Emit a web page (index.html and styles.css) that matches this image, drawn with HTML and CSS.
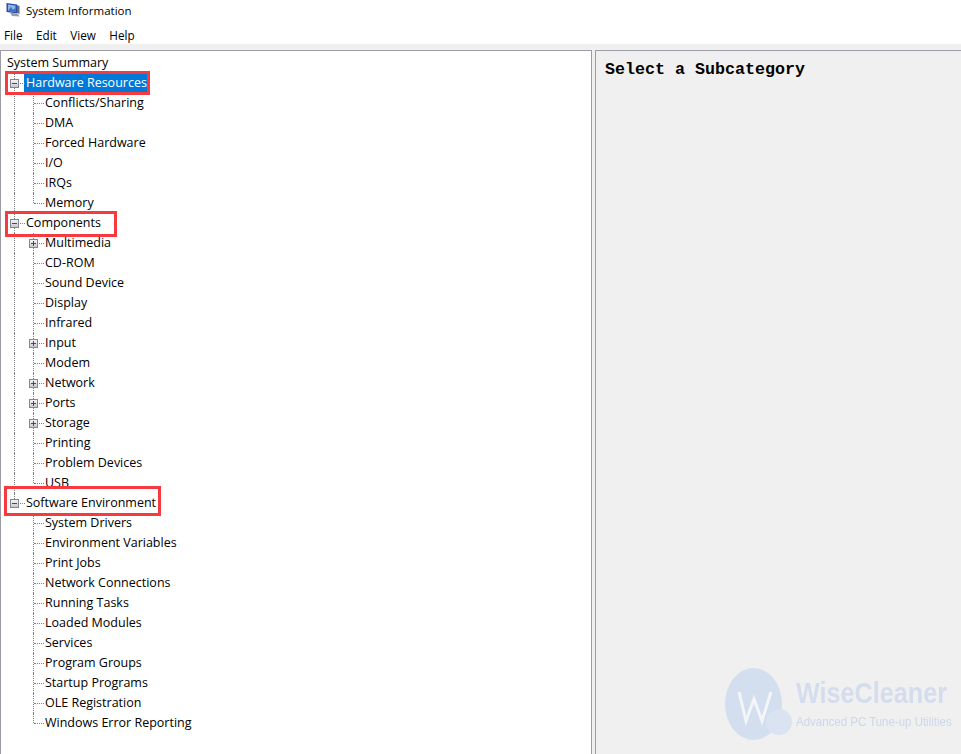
FILE: index.html
```html
<!DOCTYPE html>
<html lang="en">
<head>
<meta charset="utf-8">
<title>System Information</title>
<link rel="stylesheet" href="styles.css">
</head>
<body>
<div class="window">
  <header class="titlebar">
    <svg class="appicon" width="16" height="16" viewBox="0 0 16 16"><path d="M1.5 1l10.5 1.5v9L1.5 10z" fill="#2a4fa8"/><path d="M3 2.6l7.5 1v6.4L3 9z" fill="#8fb4e8"/><path d="M3 9l3-4 2 3 2.5-2v4z" fill="#3f6fc4"/><path d="M5 10.5l8 1.5 1.5 2.5L7 14z" fill="#9a9aa6"/><path d="M12 3l2.5 1v8L12 11z" fill="#5c6a8c"/></svg>
    <span>System Information</span>
  </header>
  <nav class="menubar"><span>File</span><span>Edit</span><span>View</span><span>Help</span></nav>
  <main class="panes">
    <section class="tree">
      <div class="row top"><span class="label">System Summary</span></div>

      <div class="row"><span class="cell tee rootc"><i class="exp minus"></i></span><span class="label sel">Hardware Resources</span></div>
      <div class="row"><span class="cell pipe"></span><span class="cell tee"></span><span class="label">Conflicts/Sharing</span></div>
      <div class="row"><span class="cell pipe"></span><span class="cell tee"></span><span class="label">DMA</span></div>
      <div class="row"><span class="cell pipe"></span><span class="cell tee"></span><span class="label">Forced Hardware</span></div>
      <div class="row"><span class="cell pipe"></span><span class="cell tee"></span><span class="label">I/O</span></div>
      <div class="row"><span class="cell pipe"></span><span class="cell tee"></span><span class="label">IRQs</span></div>
      <div class="row"><span class="cell pipe"></span><span class="cell end"></span><span class="label">Memory</span></div>

      <div class="row"><span class="cell tee rootc"><i class="exp minus"></i></span><span class="label">Components</span></div>
      <div class="row"><span class="cell pipe"></span><span class="cell tee"><i class="exp plus"></i></span><span class="label">Multimedia</span></div>
      <div class="row"><span class="cell pipe"></span><span class="cell tee"></span><span class="label">CD-ROM</span></div>
      <div class="row"><span class="cell pipe"></span><span class="cell tee"></span><span class="label">Sound Device</span></div>
      <div class="row"><span class="cell pipe"></span><span class="cell tee"></span><span class="label">Display</span></div>
      <div class="row"><span class="cell pipe"></span><span class="cell tee"></span><span class="label">Infrared</span></div>
      <div class="row"><span class="cell pipe"></span><span class="cell tee"><i class="exp plus"></i></span><span class="label">Input</span></div>
      <div class="row"><span class="cell pipe"></span><span class="cell tee"></span><span class="label">Modem</span></div>
      <div class="row"><span class="cell pipe"></span><span class="cell tee"><i class="exp plus"></i></span><span class="label">Network</span></div>
      <div class="row"><span class="cell pipe"></span><span class="cell tee"><i class="exp plus"></i></span><span class="label">Ports</span></div>
      <div class="row"><span class="cell pipe"></span><span class="cell tee"><i class="exp plus"></i></span><span class="label">Storage</span></div>
      <div class="row"><span class="cell pipe"></span><span class="cell tee"></span><span class="label">Printing</span></div>
      <div class="row"><span class="cell pipe"></span><span class="cell tee"></span><span class="label">Problem Devices</span></div>
      <div class="row"><span class="cell pipe"></span><span class="cell end"></span><span class="label">USB</span></div>

      <div class="row"><span class="cell end rootc"><i class="exp minus"></i></span><span class="label">Software Environment</span></div>
      <div class="row"><span class="cell blank"></span><span class="cell tee"></span><span class="label">System Drivers</span></div>
      <div class="row"><span class="cell blank"></span><span class="cell tee"></span><span class="label">Environment Variables</span></div>
      <div class="row"><span class="cell blank"></span><span class="cell tee"></span><span class="label">Print Jobs</span></div>
      <div class="row"><span class="cell blank"></span><span class="cell tee"></span><span class="label">Network Connections</span></div>
      <div class="row"><span class="cell blank"></span><span class="cell tee"></span><span class="label">Running Tasks</span></div>
      <div class="row"><span class="cell blank"></span><span class="cell tee"></span><span class="label">Loaded Modules</span></div>
      <div class="row"><span class="cell blank"></span><span class="cell tee"></span><span class="label">Services</span></div>
      <div class="row"><span class="cell blank"></span><span class="cell tee"></span><span class="label">Program Groups</span></div>
      <div class="row"><span class="cell blank"></span><span class="cell tee"></span><span class="label">Startup Programs</span></div>
      <div class="row"><span class="cell blank"></span><span class="cell tee"></span><span class="label">OLE Registration</span></div>
      <div class="row"><span class="cell blank"></span><span class="cell end"></span><span class="label">Windows Error Reporting</span></div>
    </section>
    <section class="detail">
      <h1 class="heading">Select a Subcategory</h1>
    </section>
  </main>
  <div class="mark mark-hw"></div>
  <div class="mark mark-comp"></div>
  <div class="mark mark-sw"></div>
  <div class="watermark">
    <svg class="wm-logo" width="68" height="74" viewBox="0 0 68 74"><ellipse cx="28.5" cy="37" rx="28.5" ry="36" fill="#d3deee"/><circle cx="54" cy="55" r="13" fill="#d9e3f1"/><path d="M14 25l7 29 8-22 8 22 9-29" fill="none" stroke="#f3f5f8" stroke-width="3"/></svg>
    <div class="wm-text">
      <div class="wm-name">WiseCleaner</div>
      <div class="wm-tag">Advanced PC Tune-up Utilities</div>
    </div>
  </div>
</div>
</body>
</html>
```

FILE: styles.css
```css
* { box-sizing: border-box; }
html, body { margin: 0; height: 100%; overflow: hidden; background: #fff; }
body { font-family: "Open Sans", "Noto Sans", sans-serif; font-size: 12.5px; color: #000; }

.window { position: relative; width: 961px; height: 754px; display: flex; flex-direction: column; }

.titlebar { height: 22px; display: flex; align-items: center; padding: 0 0 2px 5px; gap: 5px; font-size: 11.5px; }
.appicon { flex: none; }
.menubar { height: 22px; display: flex; align-items: center; padding: 3px 0 0 4px; gap: 13.5px; font-size: 11.7px; }

.panes { flex: 1; min-height: 0; display: flex; gap: 3px; background: #f0f0f0; padding-top: 6px; }

.tree { width: 592px; flex: none; background: #fff; border: 1px solid #9b9ba3; border-bottom: 0; padding-top: 2px; overflow: hidden; }
.row { height: 20px; display: flex; align-items: center; padding-left: 13px; white-space: nowrap; }
.row.top { padding-left: 6px; }
.label { line-height: 20px; height: 20px; }
.sel { background: #0078d7; color: #fff; margin-left: -2px; padding: 0 1px 0 2px; }

.cell { position: relative; flex: none; height: 20px; width: 12px; }
.cell.pipe, .cell.blank { width: 19px; }
.cell.rootc { width: 12px; }
.pipe::before, .tee::before, .end::before { content: ""; position: absolute; left: 0; top: 0; border-left: 1px dotted #808080; height: 20px; }
.end::before { height: 10px; }
.tee::after, .end::after { content: ""; position: absolute; left: 1px; top: 10px; width: 10px; border-top: 1px dotted #808080; }

.exp { position: absolute; left: -4px; top: 6px; width: 9px; height: 9px; border: 1px solid #85858e; background: linear-gradient(#f4f4f6, #c8c8d2); z-index: 1; }
.exp::before { content: ""; position: absolute; left: 1px; top: 3px; width: 5px; height: 1px; background: #3c4a78; }
.plus::after { content: ""; position: absolute; left: 3px; top: 1px; width: 1px; height: 5px; background: #3c4a78; }

.detail { flex: 1; border-top: 1px solid #9b9ba3; border-left: 1px solid #9b9ba3; padding: 10px 0 0 9px; }
.heading { margin: 0; font: bold 16.67px/18px "Liberation Mono", monospace; }

.mark { position: absolute; border: 3px solid #f63a3f; }
.mark-hw { left: 5px; top: 71px; width: 145px; height: 24px; }
.mark-comp { left: 5px; top: 211px; width: 112px; height: 26px; }
.mark-sw { left: 4px; top: 486px; width: 157px; height: 30px; }

.watermark { position: absolute; left: 725px; top: 667px; display: flex; gap: 3px; filter: blur(0.5px); }
.wm-logo { flex: none; }
.wm-text { padding-top: 8px; width: 165px; }
.wm-name { font: bold 30px/36px "Liberation Sans", sans-serif; color: #d4dded; white-space: nowrap; transform: scaleX(0.84); transform-origin: left center; }
.wm-tag { font: 13.5px/18px "Liberation Sans", sans-serif; color: #ccd7e9; white-space: nowrap; margin-top: 2px; transform: scaleX(0.85); transform-origin: left center; }
```
